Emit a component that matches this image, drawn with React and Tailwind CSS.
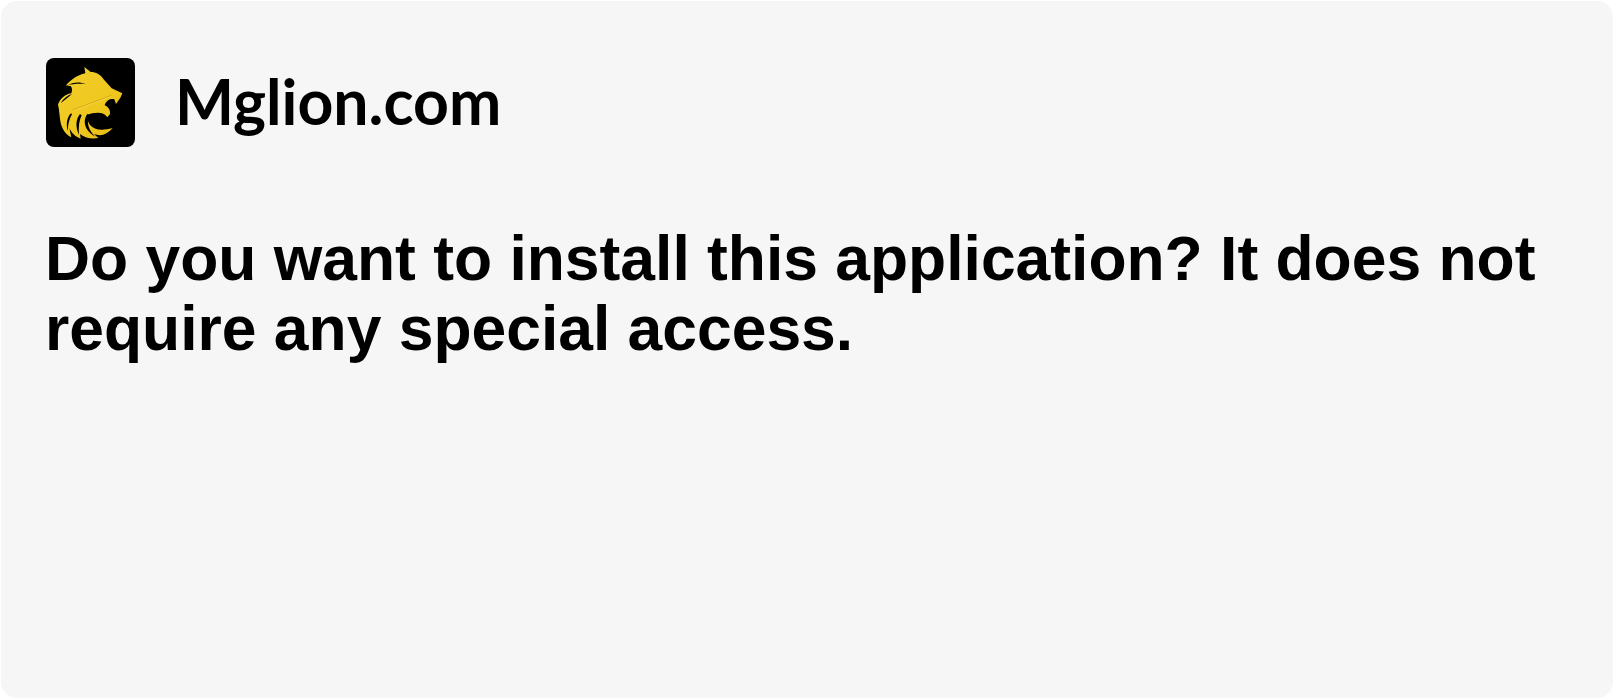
function LionLogo() {
  return (
    <svg viewBox="48 40 267 267" className="w-full h-full">
      <defs>
        <linearGradient id="gold" x1="0" y1="0" x2="1" y2="1">
          <stop offset="0" stopColor="#f3cf2b" />
          <stop offset="0.55" stopColor="#efc81f" />
          <stop offset="1" stopColor="#e6b916" />
        </linearGradient>
      </defs>
      {/* mane and head */}
      <path
        fill="url(#gold)"
        d="M163 67 L182 82 C198 82 212 90 222 105 L245 131 L277 146 L272 158 L258 178 L253 164 C240 160 228 168 224 182 C234 186 242 196 240 208 L232 218 C226 208 216 204 204 204 C192 204 180 206 172 210 C170 240 190 266 248 250 C232 270 212 276 192 268 L205 280 C186 284 166 280 150 268 L152 282 C136 276 124 264 118 250 L124 278 C104 268 92 246 90 222 C88 208 88 196 84 180 C90 162 104 150 124 146 C128 136 126 128 122 124 C118 124 112 124 108 122 C122 106 140 92 166 86 Z"
      />
      {/* dark mane cuts */}
      <path fill="#000" d="M112 122 C128 112 150 110 168 119 C150 116 130 118 112 122 Z" />
      <path fill="#000" d="M92 176 C100 162 112 152 126 148 C114 158 104 166 92 176 Z" />
      <path fill="#000" d="M123 206 C111 218 107 238 114 260 C113 242 117 224 126 209 Z" />
      <path fill="#000" d="M150 208 C138 222 135 246 147 270 C145 248 147 228 155 212 Z" />
      <path fill="#000" d="M172 208 C160 224 158 254 196 276 C176 258 168 232 178 212 Z" />
      {/* muzzle highlight */}
      <path fill="none" stroke="#c99a0c" strokeWidth="2" d="M128 196 L245 152" />
      <path fill="none" stroke="#fbe56a" strokeWidth="1.5" d="M128 199 L245 155" />
    </svg>
  );
}

function App() {
  return (
    <div className="w-[1614px] h-[699px] bg-white p-px">
      <div className="h-full bg-[#f6f6f6] rounded-2xl pl-[44px] pr-[40px] pt-[57px]">
        <div className="flex items-center gap-[40px] h-[89px]">
          <div className="w-[89px] h-[89px] ml-px bg-black rounded-lg overflow-hidden shrink-0">
            <LionLogo />
          </div>
          <span className="font-['Lato',sans-serif] font-bold text-[62.5px] leading-none text-black -mt-[3px]">
            Mglion.com
          </span>
        </div>
        <h1 className="mt-[77px] font-['Liberation_Sans',Arial,sans-serif] font-bold text-[62.4px] leading-[70px] text-black">
          Do you want to install this application? It does not require any special access.
        </h1>
      </div>
    </div>
  );
}

export default App;
